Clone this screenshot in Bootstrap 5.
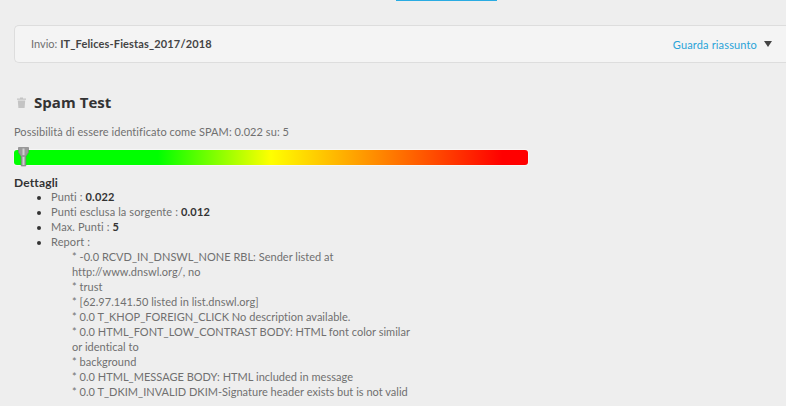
<!DOCTYPE html>
<html lang="it"><head><meta charset="utf-8">
<link href="https://cdn.jsdelivr.net/npm/bootstrap@5.3.0/dist/css/bootstrap.min.css" rel="stylesheet">
<style>
html,body{height:406px;overflow:hidden}
body{background:#eee;font-family:Lato,"Liberation Sans",sans-serif;font-size:11px;line-height:15px;color:#707070;padding-left:14px}
.tabline{height:1px;width:101px;margin-left:382px;background:#29abe2;margin-bottom:24px}
.sendbar{height:38px;margin-right:-6px;background:#f4f4f4;border:1px solid #ddd;border-right:0;border-radius:5px 0 0 5px;padding:0 20px 0 16px;margin-bottom:30px;font-size:11px}
.sendbar>span:first-child{margin-top:-2px}
.sendbar b{color:#444;letter-spacing:.14px}
.sendbar a{color:#29a3d8;text-decoration:none;font-size:11px;letter-spacing:.15px}
.caretd{width:0;height:0;border-left:4.500px solid transparent;border-right:4.500px solid transparent;border-top:6px solid #444;margin-left:7px}
.ttl{margin:0 0 13px;font-size:15px;line-height:18px;font-weight:700;color:#333;letter-spacing:.05px;font-family:"Open Sans",sans-serif}
.ttl svg{margin:0 8px 0 3px}
.possib{margin-bottom:11px;letter-spacing:.06px}
.meter{width:514px;height:15px;border-radius:3px;background:linear-gradient(to right,#0f0 0,#0f0 28%,#ff0 50%,#f00 95%);margin-bottom:11px;box-shadow:0 0 0 1px #f6f6f6}
.pin{position:absolute;left:4px;top:-3px}
.dett{font-weight:700;color:#333;font-size:12px;line-height:13px;letter-spacing:.15px}
.det{padding-left:37px;margin:0;letter-spacing:.1px}
.det li::marker{color:#333}
.det b{color:#333;letter-spacing:.2px}
.rep{padding-left:21px;white-space:nowrap;letter-spacing:.02px}
</style></head>
<body>
<div class="tabline"></div>
<div class="sendbar d-flex align-items-center justify-content-between">
<span>Invio: <b>IT_Felices-Fiestas_2017/2018</b></span>
<span class="d-flex align-items-center"><a href="#">Guarda riassunto</a><span class="caretd"></span></span>
</div>
<h1 class="ttl d-flex align-items-center"><svg width="9" height="11" viewBox="0 0 9 11"><path fill="#c4c4c4" d="M0 1.5h3V.5h3v1h3v1.2H0zM.8 3.500h7.400L7.600 11H1.400z"/></svg>Spam Test</h1>
<div class="possib">Possibilità di essere identificato come SPAM: 0.022 su: 5</div>
<div class="meter position-relative">
<svg class="pin" width="11" height="20" viewBox="0 0 11 20"><path fill="#9a9a9a" stroke="#7a7a7a" stroke-width=".6" d="M.5.500h10v5L7.800 9.500v9.500H3.200V9.500L.5 5.500z"/><path fill="#cfcfcf" d="M4.500 1.500h2V8h-2zM4.600 10h1.800v8H4.600z"/></svg>
</div>
<div class="dett">Dettagli</div>
<ul class="det">
<li>Punti : <b>0.022</b></li>
<li>Punti esclusa la sorgente : <b>0.012</b></li>
<li>Max. Punti : <b>5</b></li>
<li>Report :
<div class="rep">* -0.0 RCVD_IN_DNSWL_NONE RBL: Sender listed at<br>http://www.dnswl.org/, no<br>* trust<br>* [62.97.141.50 listed in list.dnswl.org]<br>* 0.0 T_KHOP_FOREIGN_CLICK No description available.<br>* 0.0 HTML_FONT_LOW_CONTRAST BODY: HTML font color similar<br>or identical to<br>* background<br>* 0.0 HTML_MESSAGE BODY: HTML included in message<br>* 0.0 T_DKIM_INVALID DKIM-Signature header exists but is not valid</div>
</li>
</ul>
<script src="https://cdn.jsdelivr.net/npm/bootstrap@5.3.0/dist/js/bootstrap.bundle.min.js"></script>
</body></html>
